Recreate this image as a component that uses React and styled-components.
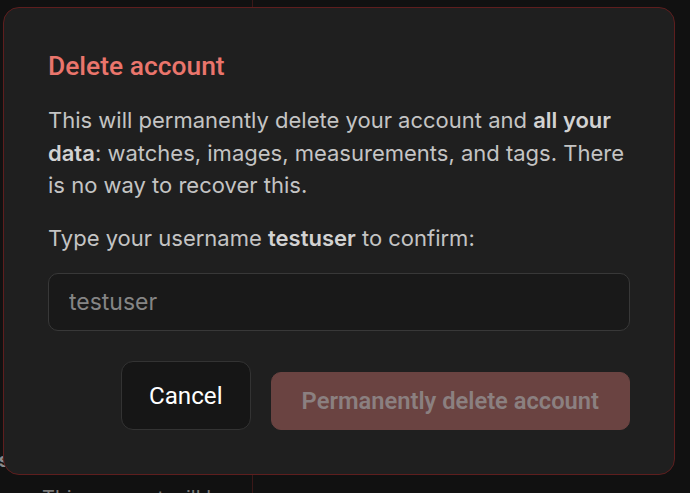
import React, { useState } from 'react';
import styled, { createGlobalStyle } from 'styled-components';

const GlobalStyle = createGlobalStyle`
  html, body {
    margin: 0;
    padding: 0;
    background: #111111;
    overflow: hidden;
  }
  * {
    box-sizing: border-box;
  }
`;

const Page = styled.div`
  position: relative;
  width: 690px;
  height: 493px;
  display: flex;
  background: #111111;
  font-family: Inter, "Liberation Sans", sans-serif;
`;

const Sidebar = styled.aside`
  width: 253px;
  height: 100%;
  border-right: 1px solid #3a1818;
  display: flex;
  flex-direction: column;
  justify-content: flex-end;
  overflow: hidden;
`;

const SideHeading = styled.h3`
  width: 209px;
  margin: 0 0 11px -200px;
  font-family: Roboto, sans-serif;
  font-size: 20px;
  line-height: 24px;
  font-weight: 700;
  text-align: right;
  color: #8a8a8a;
  white-space: nowrap;
`;

const SideText = styled.p`
  margin: 0 0 -20px 42px;
  font-size: 20px;
  line-height: 30px;
  color: #7a7a7a;
  white-space: nowrap;
`;

const Dialog = styled.div`
  position: absolute;
  top: 7px;
  left: 3px;
  width: 672px;
  padding: 44px;
  background: #1f1f1f;
  border: 1px solid #5e1e1e;
  border-radius: 16px;
`;

const Title = styled.h2`
  margin: 0;
  font-family: Roboto, sans-serif;
  font-size: 26.4px;
  font-weight: 500;
  line-height: 29px;
  color: #ea756c;
`;

const Text = styled.p`
  margin: ${(props) => props.top || '23px'} 0 0;
  font-size: 22px;
  line-height: 32.5px;
  color: #c4c4c4;

  strong {
    font-weight: 600;
    color: #d2d2d2;
  }
`;

const Input = styled.input`
  display: block;
  width: 100%;
  height: 58px;
  margin-top: 19px;
  padding: 0 20px;
  background: #191919;
  border: 1px solid #383838;
  border-radius: 10px;
  outline: none;
  font-family: Inter, sans-serif;
  font-size: 23px;
  color: #c4c4c4;

  &::placeholder {
    color: #858585;
  }
`;

const Actions = styled.div`
  display: flex;
  justify-content: flex-end;
  align-items: flex-end;
  gap: 20px;
  margin-top: 30px;
`;

const Button = styled.button`
  font-family: Roboto, sans-serif;
  font-size: ${(props) => (props.danger ? '23.7px' : '24.2px')};
  border-radius: ${(props) => (props.danger ? '10px' : '12px')};
  height: ${(props) => (props.danger ? '58px' : '69px')};
  padding: 0 ${(props) => (props.danger ? '30px' : '27px')};
  font-weight: ${(props) => (props.danger ? 600 : 400)};
  background: ${(props) => (props.danger ? '#6a4341' : '#161616')};
  color: ${(props) => (props.danger ? '#8b8080' : '#ffffff')};
  border: 1px solid ${(props) => (props.danger ? '#6a4341' : '#333333')};
  cursor: pointer;
`;

export default function App() {
  const [value, setValue] = useState('');

  return (
    <>
      <GlobalStyle />
      <Page>
        <Sidebar>
          <SideHeading>Danger zone actions</SideHeading>
          <SideText>This account will be removed</SideText>
        </Sidebar>
        <Dialog>
          <Title>Delete account</Title>
          <Text>
            This will permanently delete your account and <strong>all your data</strong>: watches,
            images, measurements, and tags. There is no way to recover this.
          </Text>
          <Text top="20px">
            Type your username <strong>testuser</strong> to confirm:
          </Text>
          <Input
            value={value}
            onChange={(e) => setValue(e.target.value)}
            placeholder="testuser"
          />
          <Actions>
            <Button>Cancel</Button>
            <Button danger disabled={value !== 'testuser'}>
              Permanently delete account
            </Button>
          </Actions>
        </Dialog>
      </Page>
    </>
  );
}
